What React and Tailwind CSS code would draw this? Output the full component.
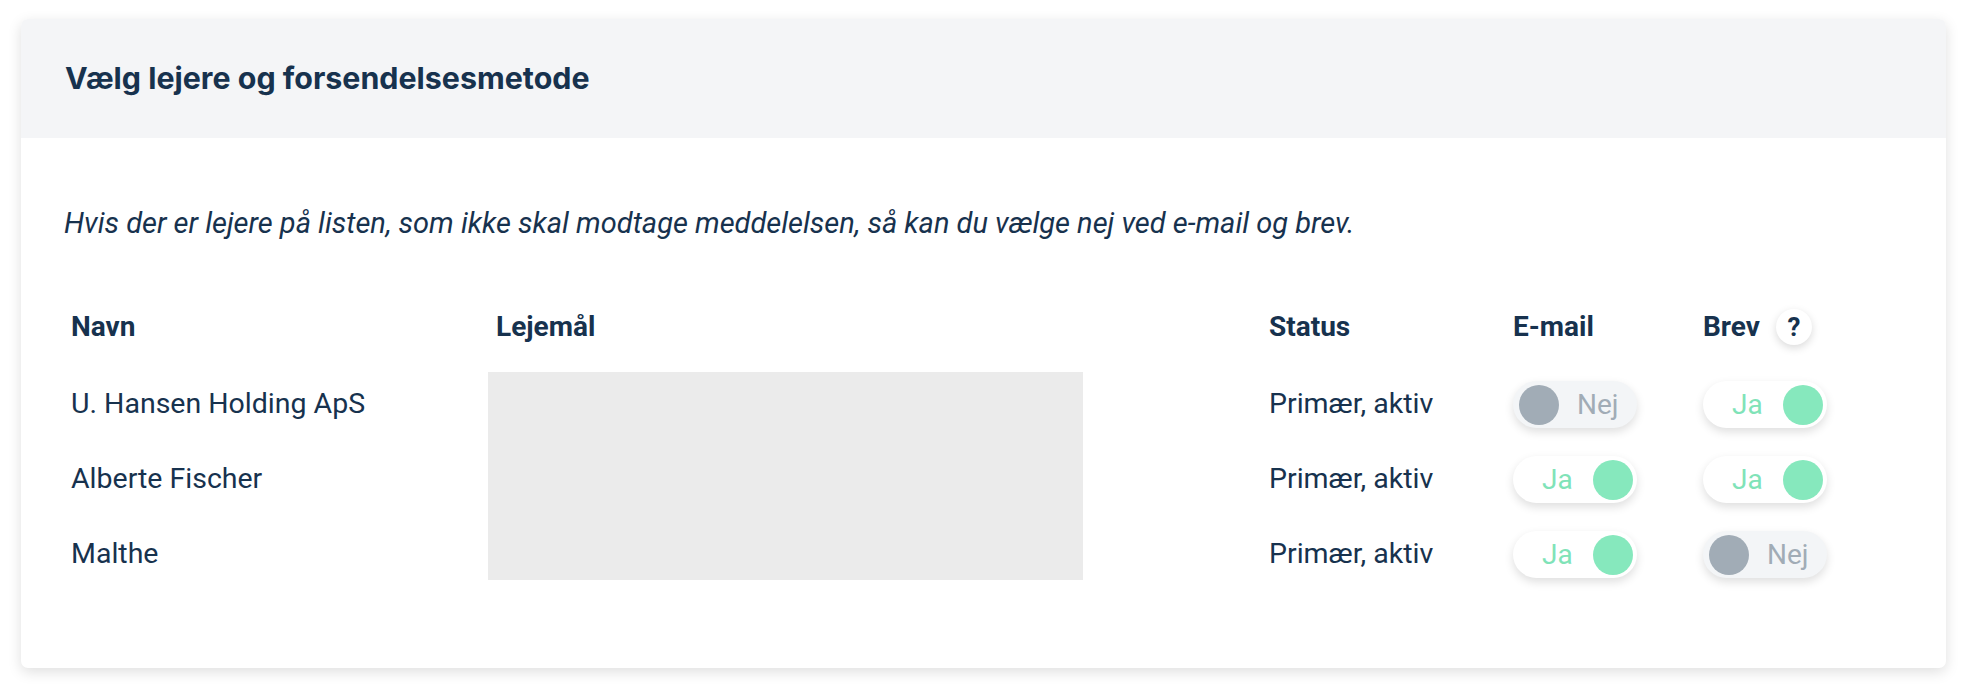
import React from 'react'

const tenants = [
  { name: 'U. Hansen Holding ApS', status: 'Primær, aktiv', email: false, letter: true },
  { name: 'Alberte Fischer', status: 'Primær, aktiv', email: true, letter: true },
  { name: 'Malthe', status: 'Primær, aktiv', email: true, letter: false },
];

function Toggle({ on }) {
  if (on) {
    return (
      <div className="w-[124px] h-[47px] rounded-full bg-white shadow-[0_4px_10px_rgba(0,0,0,0.13)] flex items-center justify-between pl-[29px] pr-[4px]">
        <span className="text-[28px] text-[#80e3b8] leading-none">Ja</span>
        <span className="w-[40px] h-[40px] rounded-full bg-[#86e8bd]"></span>
      </div>
    );
  }
  return (
    <div className="w-[124px] h-[47px] rounded-full bg-[#f3f5f7] shadow-[0_4px_10px_rgba(0,0,0,0.13)] flex items-center pl-[6px]">
      <span className="w-[40px] h-[40px] rounded-full bg-[#a1acb6]"></span>
      <span className="ml-[18px] text-[28px] text-[#a1acb6] leading-none">Nej</span>
    </div>
  );
}

export default function App() {
  return (
    <div className="w-full h-[690px] bg-white pt-[19px] pl-[21px] font-['Roboto',sans-serif] text-[#17324e]">
      <div className="w-[1925px] h-[649px] rounded-[7px] bg-white shadow-[0_4px_14px_rgba(0,0,0,0.13)] overflow-hidden">
        <div className="h-[119px] bg-[#f4f5f7] flex items-center px-[44px]">
          <h2 className="font-['Inter',sans-serif] font-bold text-[30.4px] leading-none">Vælg lejere og forsendelsesmetode</h2>
        </div>

        <div className="px-[42px]">
          <p className="mt-[65px] italic text-[29px] leading-[40px] pl-[1px]">
            Hvis der er lejere på listen, som ikke skal modtage meddelelsen, så kan du vælge nej ved e-mail og brev.
          </p>

          <div className="mt-[49px]">
            <div className="grid grid-cols-[425px_773px_244px_190px_1fr] h-[70px] items-center font-bold text-[28px]">
              <div className="px-[8px]">Navn</div>
              <div className="px-[8px]">Lejemål</div>
              <div className="px-[8px]">Status</div>
              <div className="px-[8px]">E-mail</div>
              <div className="px-[8px] flex items-center">
                Brev
                <span className="ml-[16px] w-[36px] h-[36px] rounded-full bg-white shadow-[0_3px_8px_rgba(0,0,0,0.15)] flex items-center justify-center text-[26px] font-bold leading-none">?</span>
              </div>
            </div>

            <div className="mt-[5px] grid grid-cols-[425px_773px_244px_190px_1fr] grid-rows-[75px_75px_75px] items-center text-[28.5px]">
              {tenants.map((t, i) => (
                <React.Fragment key={t.name}>
                  <div className="px-[8px]">{t.name}</div>
                  {i === 0 && (
                    <div className="row-span-3 self-start mt-[5px] w-[595px] h-[208px] bg-[#ebebeb]"></div>
                  )}
                  <div className="px-[8px]">{t.status}</div>
                  <div className="px-[8px]"><Toggle on={t.email} /></div>
                  <div className="px-[8px]"><Toggle on={t.letter} /></div>
                </React.Fragment>
              ))}
            </div>
          </div>
        </div>
      </div>
    </div>
  );
}
